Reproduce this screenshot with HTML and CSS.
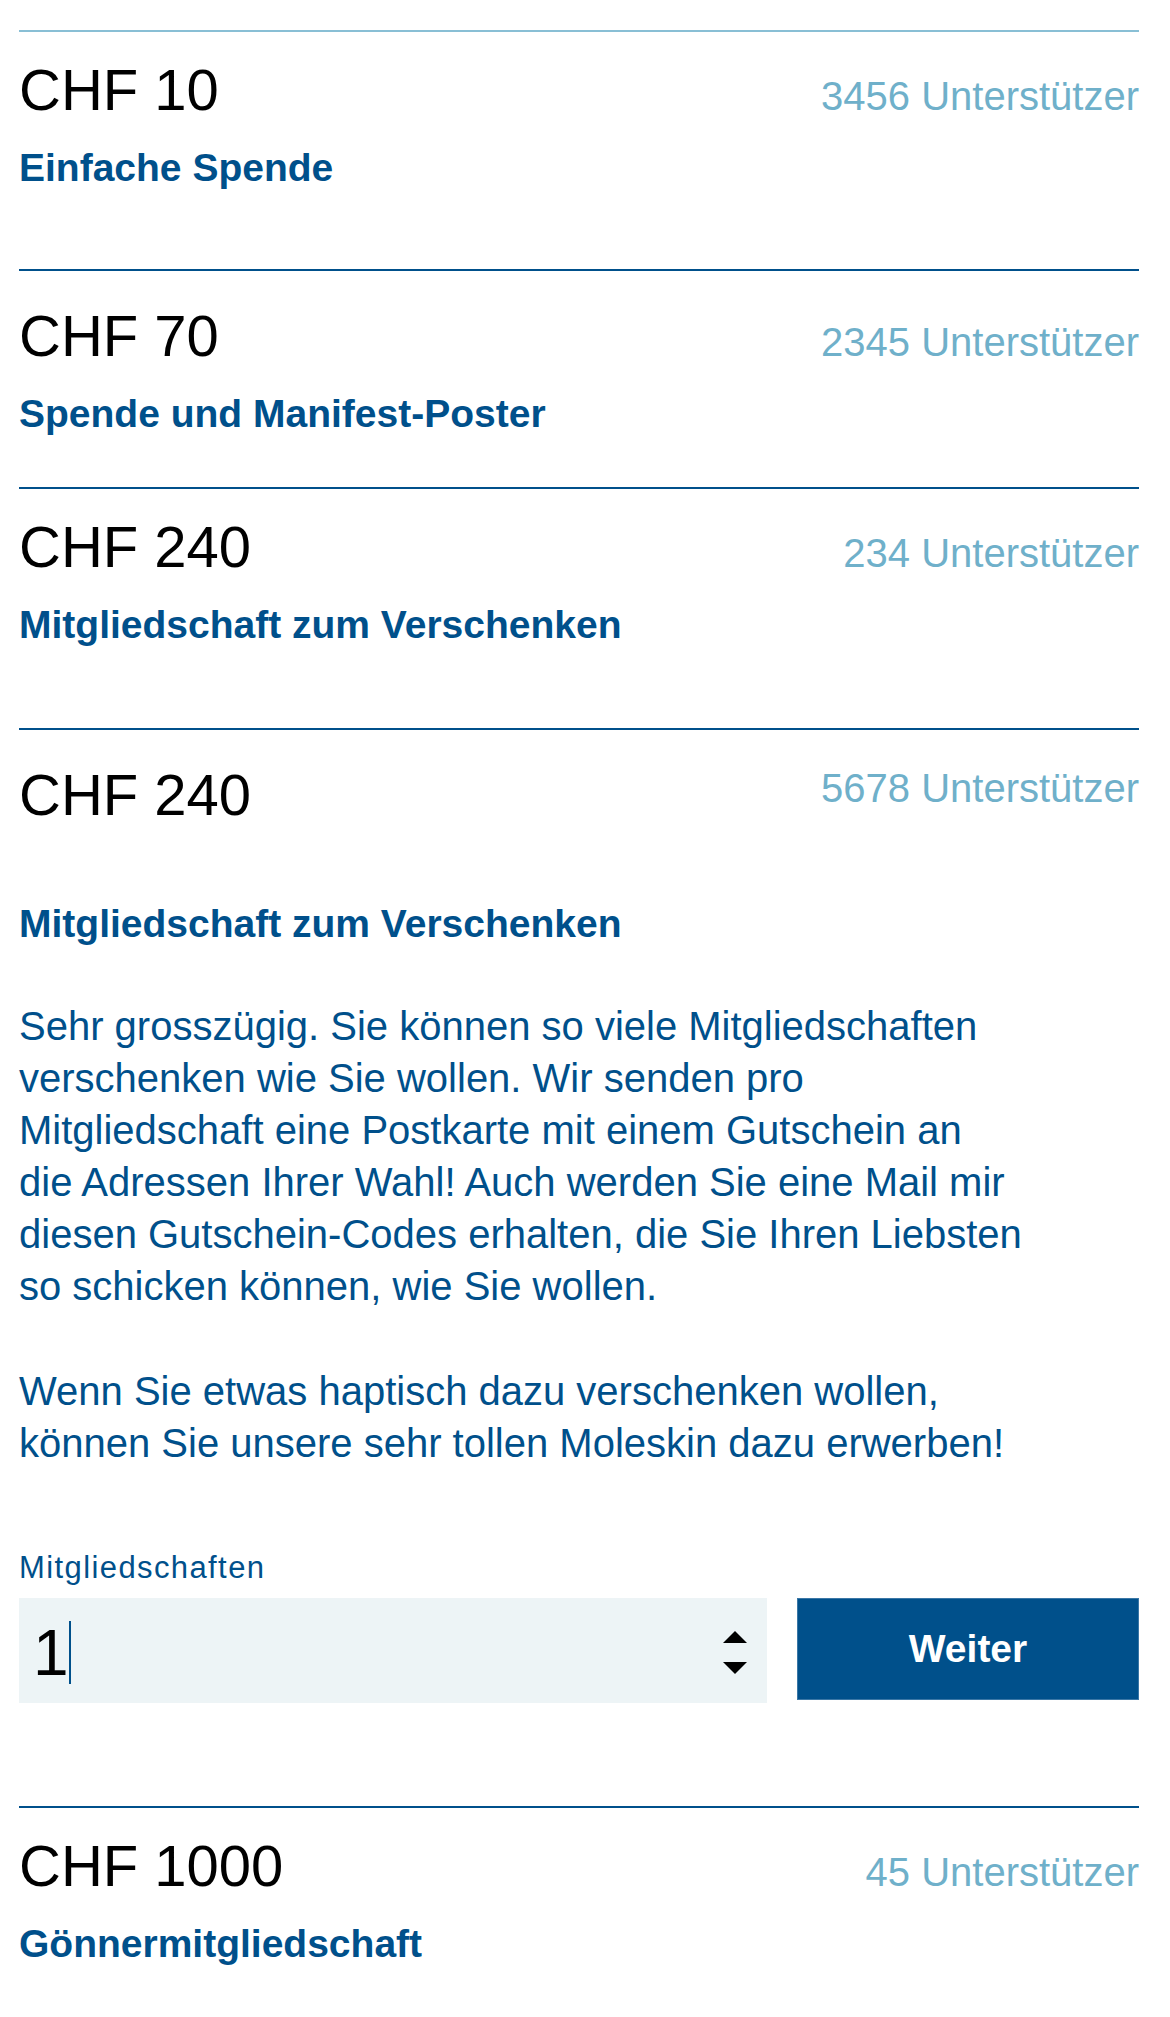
FILE: index.html
```html
<!DOCTYPE html>
<html lang="de">
<head>
<meta charset="utf-8">
<title>Belohnungen</title>
<link rel="stylesheet" href="styles.css">
</head>
<body>
<main class="rewards">
  <section class="reward reward--first">
    <div class="reward__head">
      <span class="reward__price">CHF 10</span>
      <span class="reward__count">3456 Unterstützer</span>
    </div>
    <h3 class="reward__title">Einfache Spende</h3>
  </section>

  <section class="reward reward--tall reward--tight">
    <div class="reward__head">
      <span class="reward__price">CHF 70</span>
      <span class="reward__count">2345 Unterstützer</span>
    </div>
    <h3 class="reward__title">Spende und Manifest-Poster</h3>
  </section>

  <section class="reward reward--loose">
    <div class="reward__head">
      <span class="reward__price">CHF 240</span>
      <span class="reward__count">234 Unterstützer</span>
    </div>
    <h3 class="reward__title">Mitgliedschaft zum Verschenken</h3>
  </section>

  <section class="reward reward--tall reward--open">
    <div class="reward__head">
      <span class="reward__price">CHF 240</span>
      <span class="reward__count">5678 Unterstützer</span>
    </div>
    <h3 class="reward__title">Mitgliedschaft zum Verschenken</h3>
    <p class="reward__text">Sehr grosszügig. Sie können so viele Mitgliedschaften verschenken wie Sie wollen. Wir senden pro Mitgliedschaft eine Postkarte mit einem Gutschein an die Adressen Ihrer Wahl! Auch werden Sie eine Mail mir diesen Gutschein-Codes erhalten, die Sie Ihren Liebsten so schicken können, wie Sie wollen.</p>
    <p class="reward__text reward__text--next">Wenn Sie etwas haptisch dazu verschenken wollen, können Sie unsere sehr tollen Moleskin dazu erwerben!</p>
    <form class="order">
      <label class="order__label">Mitgliedschaften</label>
      <div class="order__row">
        <div class="qty">
          <span class="qty__value">1</span><span class="qty__caret"></span>
          <svg class="qty__spin" width="24" height="43" viewBox="0 0 24 43" aria-hidden="true">
            <polygon points="0,12 12,0 24,12" fill="#000"/>
            <polygon points="0,31 24,31 12,43" fill="#000"/>
          </svg>
        </div>
        <button type="button" class="order__btn">Weiter</button>
      </div>
    </form>
  </section>

  <section class="reward">
    <div class="reward__head">
      <span class="reward__price">CHF 1000</span>
      <span class="reward__count">45 Unterstützer</span>
    </div>
    <h3 class="reward__title">Gönnermitgliedschaft</h3>
  </section>
</main>
</body>
</html>
```

FILE: styles.css
```css
* {
  box-sizing: border-box;
}

html, body {
  margin: 0;
  padding: 0;
  background: #ffffff;
}

body {
  font-family: "Liberation Sans", Arial, sans-serif;
  color: #00508b;
}

.rewards {
  width: 1120px;
  margin-left: 19px;
  padding-top: 30px;
}

.reward {
  border-top: 2px solid #00508b;
  padding: 23px 0 80px;
}

.reward--first {
  border-top-color: #89bfd5;
  padding-bottom: 77px;
}

.reward--tall {
  padding-top: 30px;
}

.reward--tight {
  padding-bottom: 49px;
}

.reward--loose {
  padding-bottom: 79px;
}

.reward__head {
  display: flex;
  justify-content: space-between;
  align-items: baseline;
}

.reward__price {
  font-size: 58px;
  line-height: 70px;
  color: #000000;
}

.reward__count {
  font-size: 40px;
  line-height: 57px;
  color: #6fb0ca;
}

.reward__title {
  margin: 19px 0 0;
  font-size: 39px;
  line-height: 48px;
  font-weight: bold;
  color: #00508b;
}

/* expanded reward */
.reward--open {
  padding-bottom: 103px;
}

.reward--open .reward__head {
  align-items: flex-start;
}

.reward--open .reward__title {
  margin-top: 70px;
}

.reward__text {
  margin: 52px 0 0;
  max-width: 1005px;
  font-size: 40px;
  line-height: 52px;
}

.reward__text--next {
  margin-top: 53px;
}

.order {
  margin-top: 81px;
}

.order__label {
  display: block;
  font-size: 31px;
  line-height: 36px;
  letter-spacing: 1.4px;
}

.order__row {
  margin-top: 12px;
  display: grid;
  grid-template-columns: 1fr 342px;
  column-gap: 30px;
  align-items: start;
}

.qty {
  height: 105px;
  background: #edf4f6;
  display: flex;
  align-items: center;
  padding: 4px 20px 0 14px;
}

.qty__value {
  font-size: 64px;
  line-height: 64px;
  color: #000000;
}

.qty__caret {
  width: 2px;
  height: 63px;
  background: #00508b;
}

.qty__spin {
  margin-left: auto;
  display: block;
}

.order__btn {
  height: 102px;
  border: 1px solid #3a77a6;
  background: #00508b;
  color: #ffffff;
  font-family: "Liberation Sans", Arial, sans-serif;
  font-size: 39px;
  font-weight: bold;
  padding: 0;
  cursor: pointer;
}
```
